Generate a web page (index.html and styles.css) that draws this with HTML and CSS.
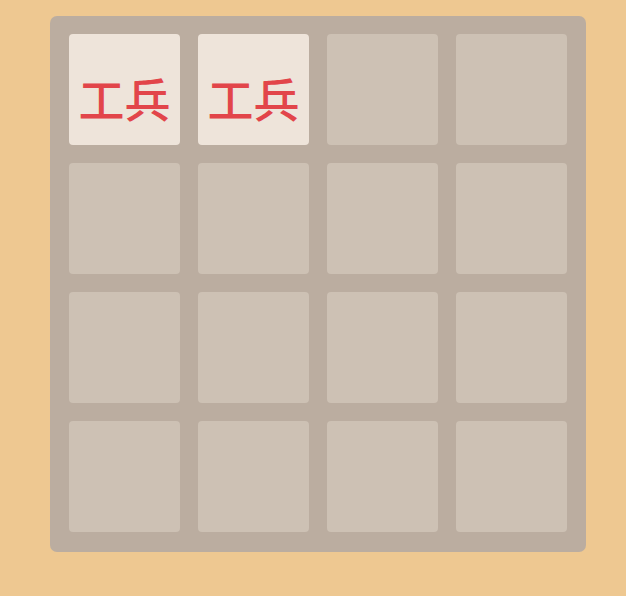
FILE: index.html
```html
<!DOCTYPE html>
<html lang="zh-Hans">
<head>
    <meta charset="UTF-8">
    <title>工兵 2048</title>
    <meta name="viewport" content="width=device-width, initial-scale=1">
    <link rel="stylesheet" href="styles.css">
</head>
<body>
    <div class="board">
        <div class="cell filled">工兵</div>
        <div class="cell filled">工兵</div>
        <div class="cell"></div>
        <div class="cell"></div>
        <div class="cell"></div>
        <div class="cell"></div>
        <div class="cell"></div>
        <div class="cell"></div>
        <div class="cell"></div>
        <div class="cell"></div>
        <div class="cell"></div>
        <div class="cell"></div>
        <div class="cell"></div>
        <div class="cell"></div>
        <div class="cell"></div>
        <div class="cell"></div>
    </div>
</body>
</html>
```

FILE: styles.css
```css
html, body {
    height: 100%;
}
body {
    margin: 0;
    padding: 16px 0 0 50px;
    box-sizing: border-box;
    background-color: #eec891;
    font-family: "Noto Sans CJK SC", "Noto Sans", sans-serif;
}
.board {
    width: 536px;
    height: 536px;
    box-sizing: border-box;
    padding: 18px 19px 20px 19px;
    background-color: #bbada0;
    border-radius: 7px;
    display: grid;
    grid-template-columns: repeat(4, 1fr);
    grid-template-rows: repeat(4, 1fr);
    gap: 18px;
}
.cell {
    background-color: #cdc1b4;
    border-radius: 4px;
    display: flex;
    align-items: center;
    justify-content: center;
}
.filled {
    background-color: #eee4da;
    color: #e2454a;
    font-size: 46px;
    font-weight: 500;
    padding-top: 14px;
    box-sizing: border-box;
    line-height: 1;
}
```
